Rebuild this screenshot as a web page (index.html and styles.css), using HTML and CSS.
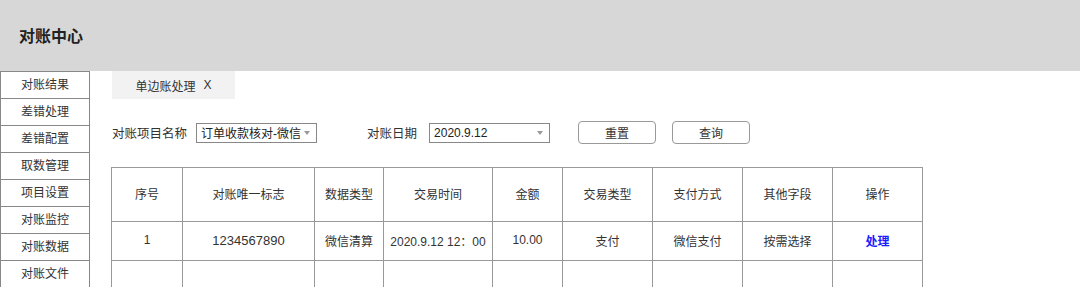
FILE: index.html
```html
<!DOCTYPE html>
<html lang="zh">
<head>
<meta charset="utf-8">
<link rel="stylesheet" href="styles.css">
</head>
<body>
<header class="topbar"><h1 class="title">对账中心</h1></header>
<div class="main">
  <nav class="sidebar">
    <div class="nav-item">对账结果</div>
    <div class="nav-item">差错处理</div>
    <div class="nav-item">差错配置</div>
    <div class="nav-item">取数管理</div>
    <div class="nav-item">项目设置</div>
    <div class="nav-item">对账监控</div>
    <div class="nav-item">对账数据</div>
    <div class="nav-item">对账文件</div>
  </nav>
  <section class="content">
    <div class="tabs"><div class="tab">单边账处理<span class="tab-close">X</span></div></div>
    <div class="filters">
      <span class="label label-project">对账项目名称</span>
      <div class="select select-project"><span>订单收款核对-微信</span><span class="arrow"></span></div>
      <span class="label label-date">对账日期</span>
      <div class="select select-date"><span>2020.9.12</span><span class="arrow"></span></div>
      <button class="btn btn-reset">重置</button>
      <button class="btn btn-query">查询</button>
    </div>
    <table class="grid">
      <colgroup>
        <col class="c1"><col class="c2"><col class="c3"><col class="c4"><col class="c5"><col class="c6"><col class="c7"><col class="c8"><col class="c9">
      </colgroup>
      <thead>
        <tr class="head-row"><th>序号</th><th>对账唯一标志</th><th>数据类型</th><th>交易时间</th><th>金额</th><th>交易类型</th><th>支付方式</th><th>其他字段</th><th>操作</th></tr>
      </thead>
      <tbody>
        <tr class="data-row"><td>1</td><td class="big">1234567890</td><td>微信清算</td><td>2020.9.12 12：00</td><td>10.00</td><td>支付</td><td>微信支付</td><td>按需选择</td><td><a class="action">处理</a></td></tr>
        <tr class="empty-row"><td></td><td></td><td></td><td></td><td></td><td></td><td></td><td></td><td></td></tr>
      </tbody>
    </table>
  </section>
</div>
</body>
</html>
```
FILE: styles.css
```css
* { box-sizing: border-box; }
html, body { margin: 0; padding: 0; }
body {
  width: 1080px;
  height: 287px;
  overflow: hidden;
  background: #fff;
  font-family: "Liberation Sans", "Noto Sans CJK SC", sans-serif;
  color: #333;
}
.topbar {
  height: 71px;
  background: #d7d7d7;
  display: flex;
  align-items: center;
  padding-left: 19px;
}
.title {
  margin: 0;
  font-size: 16px;
  font-weight: bold;
  color: #222;
  padding-bottom: 1px;
}
.main { display: flex; align-items: flex-start; }
.sidebar {
  width: 90px;
  border: 1px solid #888;
  border-top: none;
  flex-shrink: 0;
}
.nav-item {
  height: 27px;
  display: flex;
  align-items: center;
  justify-content: center;
  font-size: 12px;
  color: #333;
  border-top: 1px solid #888;
  padding-bottom: 3px;
}
.content { padding-left: 21px; flex: 1; }
.tabs { display: flex; padding-left: 1px; }
.tab {
  width: 123px;
  height: 28px;
  background: #f2f2f2;
  font-size: 12px;
  color: #333;
  display: flex;
  align-items: center;
  justify-content: center;
}
.tab-close { margin-left: 8px; font-size: 12px; }
.filters {
  display: flex;
  align-items: center;
  height: 23px;
  margin-top: 22px;
  padding-left: 1px;
}
.label { font-size: 12.5px; color: #333; }
.label-project { margin-right: 9px; }
.label-date { margin-left: 50px; margin-right: 12px; }
.select {
  width: 121px;
  height: 20px;
  border: 1px solid #888;
  display: flex;
  align-items: center;
  justify-content: space-between;
  padding: 0 6px 0 4px;
  font-size: 12px;
  color: #222;
}
.arrow {
  width: 0; height: 0;
  border-left: 3.5px solid transparent;
  border-right: 3.5px solid transparent;
  border-top: 4px solid #999;
}
.btn {
  height: 23px;
  width: 78px;
  border: 1px solid #999;
  border-radius: 4px;
  background: #fff;
  font-family: inherit;
  font-size: 12px;
  color: #333;
  padding: 0;
}
.btn-reset { margin-left: 28px; }
.btn-query { margin-left: 16px; }
.grid {
  margin-top: 23px;
  border-collapse: collapse;
  table-layout: fixed;
  width: 811px;
  font-size: 12px;
  color: #333;
}
.grid th, .grid td {
  border: 1px solid #999;
  text-align: center;
  font-weight: normal;
  padding: 0;
}
.c1 { width: 71px; } .c2 { width: 132px; } .c3 { width: 69px; } .c4 { width: 109px; }
.c5 { width: 70px; } .c6 { width: 90px; } .c7 { width: 90px; } .c8 { width: 90px; } .c9 { width: 90px; }
.head-row { height: 54px; }
.head-row th { padding-bottom: 2px; }
.data-row { height: 39px; }
.data-row td { padding-bottom: 2px; }
.empty-row { height: 27px; }
.big { font-size: 13px; }
.action { color: #1a1aff; font-weight: bold; }
```
